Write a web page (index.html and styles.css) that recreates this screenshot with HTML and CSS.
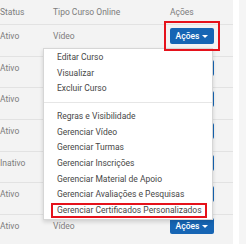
FILE: index.html
```html
<!DOCTYPE html>
<html lang="pt-BR">
<head>
  <meta charset="UTF-8">
  <meta name="viewport" content="width=device-width, initial-scale=1.0">
  <title>Cursos online</title>
  <link rel="stylesheet" href="styles.css">
</head>
<body>
  <div class="page">
    <div class="panel">
      <div class="row head">
        <div>Status</div>
        <div>Tipo Curso Online</div>
        <div>Ações</div>
      </div>
      <div class="row">
        <div>Ativo</div>
        <div>Vídeo</div>
        <div class="acoes">
          <button class="btn mark">Ações <span class="caret"></span></button>
          <ul class="menu">
            <li>Editar Curso</li>
            <li>Visualizar</li>
            <li>Excluir Curso</li>
            <li class="divider"></li>
            <li>Regras e Visibilidade</li>
            <li>Gerenciar Vídeo</li>
            <li>Gerenciar Turmas</li>
            <li>Gerenciar Inscrições</li>
            <li>Gerenciar Material de Apoio</li>
            <li>Gerenciar Avaliações e Pesquisas</li>
            <li><span class="hl">Gerenciar Certificados Personalizados</span></li>
          </ul>
        </div>
      </div>
      <div class="row">
        <div>Ativo</div>
        <div></div>
        <div><button class="btn">Ações <span class="caret"></span></button></div>
      </div>
      <div class="row">
        <div>Ativo</div>
        <div></div>
        <div><button class="btn">Ações <span class="caret"></span></button></div>
      </div>
      <div class="row">
        <div>Ativo</div>
        <div></div>
        <div><button class="btn">Ações <span class="caret"></span></button></div>
      </div>
      <div class="row">
        <div>Inativo</div>
        <div></div>
        <div><button class="btn">Ações <span class="caret"></span></button></div>
      </div>
      <div class="row">
        <div>Ativo</div>
        <div></div>
        <div><button class="btn">Ações <span class="caret"></span></button></div>
      </div>
      <div class="row">
        <div>Ativo</div>
        <div>Vídeo</div>
        <div><button class="btn">Ações <span class="caret"></span></button></div>
      </div>
    </div>
    <div class="side"></div>
  </div>
</body>
</html>
```

FILE: styles.css
```css
*{
  margin: 0;
  padding: 0;
  box-sizing: border-box;
}

html, body{
  height: 100%;
  overflow: hidden;
}

body{
  background: #fff;
  font-family: Roboto, "Liberation Sans", sans-serif;
  font-size: 8.5px;
  color: #7c7c7c;
}

.page{
  display: flex;
  height: 100%;
}

.panel{
  width: 233px;
  margin-right: 6px;
  background: #f3f3f3;
}

.side{
  flex: 1;
  background: #f5f5f5;
}

.row{
  display: grid;
  grid-template-columns: 53px 117px 1fr;
  height: 31.7px;
  padding-top: 3px;
  line-height: 16px;
  border-bottom: 1px solid #e2e2e2;
}

.row.head{
  height: 25px;
  padding-top: 0;
  align-items: center;
}

.acoes{
  position: relative;
}

.btn{
  display: flex;
  justify-content: center;
  align-items: center;
  gap: 3px;
  width: 44px;
  height: 16px;
  border: 0;
  border-radius: 2px;
  background: #1665b4;
  color: #fff;
  font-family: inherit;
  font-size: 8.5px;
  font-weight: 500;
}

.caret{
  width: 0;
  height: 0;
  border-top: 3px solid #fff;
  border-left: 3px solid transparent;
  border-right: 3px solid transparent;
}

/* red annotation boxes */
.mark{
  position: relative;
}
.mark::after{
  content: "";
  position: absolute;
  top: -7px;
  bottom: -7px;
  left: -6px;
  right: -6px;
  border: 2px solid #e5121b;
  z-index: 2;
}

.menu{
  position: absolute;
  z-index: 1;
  top: 20px;
  left: -127px;
  width: 170px;
  padding: 1px 0 1px;
  list-style: none;
  background: #fff;
  border: 1px solid #d6d6d6;
  box-shadow: 0 2px 4px rgba(0,0,0,0.15);
  color: #474747;
}

.menu > li{
  padding-left: 13px;
  line-height: 15.6px;
  white-space: nowrap;
}

.menu > .divider{
  height: 1px;
  margin: 5.7px 0;
  padding: 0;
  background: #e6e6e6;
}

.hl{
  display: inline-block;
  margin-left: -6px;
  padding: 0 3px 0 4px;
  line-height: 11.6px;
  border: 2px solid #e5121b;
}
```
